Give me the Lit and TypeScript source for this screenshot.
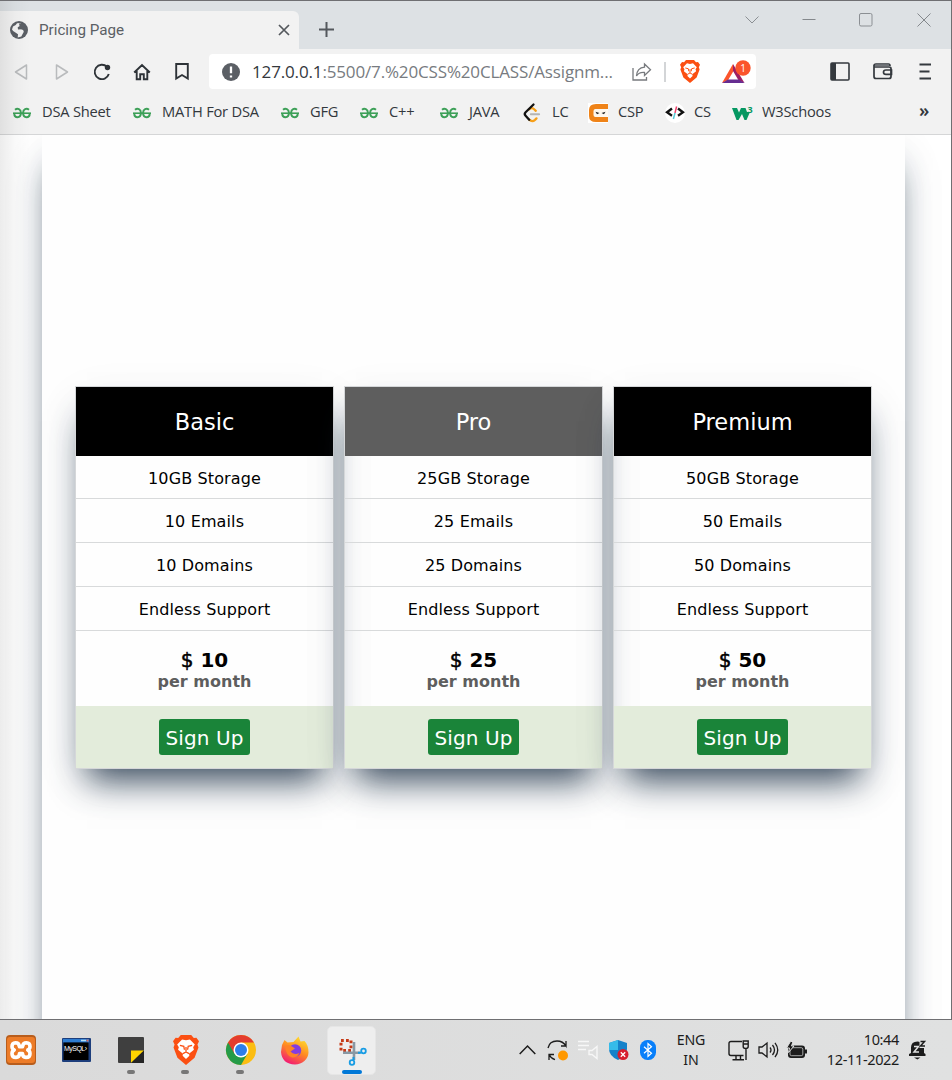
import { LitElement, html, css, svg } from "lit";
import { customElement, property } from "lit/decorators.js";

const lion = svg`
  <path d="M6 0h8l2 2.400 2-.3 2 2.900-1.200 2.500.8 2.500-3 8.200L10 24l-6.600-5.800-3-8.200.8-2.500L0 5l2-2.900 2 .3z" fill="#fb4f12"/>
  <path d="M10 4.200l3-.7 3.800 4-1.300 2.200.6 2-3.800 3.200.3 1.700L10 19.200l-2.600-2.600.3-1.700-3.800-3.200.6-2-1.300-2.200 3.800-4z" fill="#fff"/>
  <path d="M5.300 8.300l3 .8.5 2.700M14.700 8.300l-3 .8-.5 2.700M7.600 14.900l2.400-1.400 2.400 1.400M10 9.500v4" fill="none" stroke="#fb4f12" stroke-width="1"/>`;

const gfg = html`<svg width="18" height="12" viewBox="0 0 18 12" fill="none" stroke="#3da058" stroke-width="2">
  <path d="M2 2.800C4.500.9 7.900 2 7.900 5.800c0 3-1.500 4.400-3.400 4.400S1.300 9 1.300 6.500M16 2.800C13.500.9 10.100 2 10.100 5.800c0 3 1.500 4.400 3.400 4.400s3.200-1.200 3.200-3.700"/>
  <path d="M0 6.200h18" stroke-width="1.600"/></svg>`;

const leet = html`<svg width="18" height="20" viewBox="0 0 18 20" fill="none" stroke-linecap="round" stroke-width="2.300">
  <path d="M6.200 6.300q2.800-2.500 5 0l1.600 1.500M6.200 16.700q3 2.800 5.800.2l1.500-1.500" stroke="#f7a01a"/>
  <path d="M10.500 1.500L2.600 9.200q-1.700 1.700 0 3.500l3.600 4" stroke="#111"/>
  <path d="M7.800 11.300h8.300" stroke="#b4b4b4" stroke-width="2"/></svg>`;

const ninja = html`<svg width="20" height="20" viewBox="0 0 20 20">
  <rect width="20" height="20" fill="#fff"/>
  <path d="M20 1H8Q1 1 1 7v6q0 6 7 6h12v-5H8.500Q6 13.500 6 10t2.500-4H20z" fill="#ef8318"/>
  <rect x="5.500" y="6" width="14.500" height="8" rx="2" fill="#fdf7ee"/>
  <path d="M7.500 8.800l4 1.200-2.500 1.200zM17.500 8.800l-4 1.200 2.500 1.200z" fill="#222"/></svg>`;

const code = html`<svg width="20" height="20" viewBox="0 0 20 20" fill="none" stroke="#111" stroke-width="2.300">
  <circle cx="10" cy="10" r="10" fill="#fff" stroke="none"/>
  <path d="M7 5.500L2 9.300l5 3.500M13 5.500l5 3.800-5 3.500"/>
  <path d="M11.600 3.500L10 10" stroke="#f0406c" stroke-width="1.500"/><path d="M10 10l-1.600 6" stroke="#54cbd8" stroke-width="1.500"/></svg>`;

const w3 = html`<svg width="21" height="16" viewBox="0 0 21 16">
  <path d="M0 3h5l2 4.500L9 3h4.500l1.500 4h3l-3.500 8h-2L10 9l-3.500 6h-2z" fill="#059862"/>
  <text x="15.500" y="7.500" font-size="9" font-weight="700" font-family="Open Sans, sans-serif" fill="#059862">3</text></svg>`;

const bookmarks = [
  { label: "DSA Sheet", icon: gfg, pitch: 120, slot: 29 },
  { label: "MATH For DSA", icon: gfg, pitch: 148, slot: 29 },
  { label: "GFG", icon: gfg, pitch: 79, slot: 29 },
  { label: "C++", icon: gfg, pitch: 80, slot: 29 },
  { label: "JAVA", icon: gfg, pitch: 83, slot: 29 },
  { label: "LC", icon: leet, pitch: 65, slot: 29 },
  { label: "CSP", icon: ninja, pitch: 77, slot: 30 },
  { label: "CS", icon: code, pitch: 67, slot: 29 },
  { label: "W3Schoos", icon: w3, pitch: 179, slot: 30 },
];

@customElement("browser-chrome")
class BrowserChrome extends LitElement {
  static styles = css`
    :host { display: block; font-family: "Noto Sans", "Open Sans", sans-serif; color: #33383d; }
    svg { display: block; flex: none; overflow: visible; }
    .titlebar { display: flex; height: 49px; background: #dde1e4; box-sizing: border-box; border-top: 1px solid #6f6f72; }
    .tab { display: flex; align-items: center; width: 299px; height: 38px; margin-top: 10px; background: #f2f2f2; border-radius: 0 6px 0 0; box-sizing: border-box; padding: 0 9px 0 10px; }
    .tab-title { margin-left: 11px; flex: 1; font-family: Roboto, sans-serif; font-size: 15.200px; color: #5b6065; }
    .plus { margin: 21px 0 0 20px; }
    .controls { display: flex; align-items: flex-start; margin: 12px 20px 0 auto; }
    .controls svg + svg { margin-left: 43px; }
    .toolbar { display: flex; align-items: center; height: 45px; background: #f2f2f2; }
    .nav { display: flex; align-items: center; width: 209px; }
    .nav span { display: flex; justify-content: center; width: 40px; }
    .nav span:first-child { width: 42px; }
    .address { display: flex; align-items: center; width: 547px; height: 35px; background: #fff; border-radius: 4px; }
    .info { margin: 0 12px 0 13px; }
    .url { width: 380px; margin-top: -1px; font-size: 17px; white-space: nowrap; font-family: "Open Sans", sans-serif; color: #777b80; letter-spacing: -.15px; }
    .host { color: #34383c; }
    .separator { width: 1.500px; height: 20px; margin: 0 14px 0 13px; background: #d3d5d7; }
    .rewards { margin-left: 22px; }
    .right { display: flex; align-items: center; gap: 23px; margin-left: 74px; }
    .bookmarks { display: flex; align-items: center; height: 40px; padding: 0 0 0 13px; background: #f2f2f2; border-bottom: 1px solid #d5d6d7; overflow: hidden; }
    .bookmark { flex: none; display: flex; align-items: center; height: 36px; margin-top: -6px; font-family: "Open Sans", sans-serif; font-size: 14.700px; white-space: nowrap; letter-spacing: -.22px; }
    .slot { flex: none; display: flex; align-items: center; padding-top: 3px; }
    .more { font-size: 18px; font-weight: 600; margin: -9px 0 0 8px; }
    .badge { font: 10px "Open Sans", sans-serif; fill: #fff; }
  `;
  render() {
    return html`
      <div class="titlebar">
        <div class="tab">
          <svg width="18" height="18" viewBox="0 0 18 18"><circle cx="9" cy="9" r="9" fill="#5b5f65"/>
            <path d="M3 5.500Q6.500 4 7 2.200l3.800-.2-.5 2.700-2.600 1.500.3 2.300 4.800-.2 1 2.400-2.500 4.700-3.600 1 .3-3.200-2.600-1.800Q2.500 10 2 8.500z" fill="#f2f2f2"/><path d="M9 2.600l3.600-.4 2.600 3.100-2.700 3.600-2.500-2z" fill="#5b5f65"/></svg>
          <div class="tab-title">Pricing Page</div>
          <svg width="12" height="12" viewBox="0 0 12 12" stroke="#54585d" stroke-width="1.700"><path d="M1 1l10 10M11 1L1 11"/></svg>
        </div>
        <svg class="plus" width="15" height="15" viewBox="0 0 15 15" stroke="#54585d" stroke-width="2"><path d="M7.500 0v15M0 7.500h15"/></svg>
        <div class="controls">
          <svg width="14" height="14" viewBox="0 0 14 14" fill="none" stroke="#8b8f93"><path d="M.5 3.500l6.500 6.500 6.500-6.500"/></svg>
          <svg width="14" height="14" viewBox="0 0 14 14" fill="none" stroke="#84888c"><path d="M.5 6.500h13"/></svg>
          <svg width="15" height="14" viewBox="0 0 15 14" fill="none" stroke="#8b8f93"><rect x=".5" y=".5" width="12.500" height="12.500" rx="1.500"/></svg>
          <svg width="14" height="14" viewBox="0 0 14 14" fill="none" stroke="#84888c"><path d="M.5.5l13 13M13.500.5l-13 13"/></svg>
        </div>
      </div>
      <div class="toolbar">
        <div class="nav">
          <span><svg width="14" height="16" viewBox="0 0 14 16" fill="none" stroke="#b9bbbd" stroke-width="1.500" stroke-linejoin="round"><path d="M12.500 1v14L1.500 8z"/></svg></span>
          <span><svg width="14" height="16" viewBox="0 0 14 16" fill="none" stroke="#b9bbbd" stroke-width="1.500" stroke-linejoin="round"><path d="M1.500 1v14L12.500 8z"/></svg></span>
          <span><svg width="18" height="18" viewBox="0 0 18 18" fill="none" stroke="#2e3338" stroke-width="1.900"><path d="M14 3.800A7.200 7.200 0 1 0 15.800 11"/><circle cx="14.500" cy="4.500" r="2.700" fill="#2e3338" stroke="none"/></svg></span>
          <span><svg width="18" height="18" viewBox="0 0 18 18" fill="none" stroke="#2e3338" stroke-width="1.900"><path d="M1.200 9.500L9 2l7.800 7.500M3.700 8v8.200h3.500v-4.900h3.600v4.900h3.500V8"/></svg></span>
          <span><svg width="14" height="17" viewBox="0 0 14 17" fill="none" stroke="#2e3338" stroke-width="1.900"><path d="M1.200 1h11.600v14.500L7 12l-5.800 3.500z"/></svg></span>
        </div>
        <div class="address">
          <svg class="info" width="18" height="18" viewBox="0 0 18 18"><circle cx="9" cy="9" r="9" fill="#5b5f65"/><path d="M9 3.500v6.800M9 12.500v2" stroke="#fff" stroke-width="2.300"/></svg>
          <div class="url"><span class="host">127.0.0.1</span>:5500/7.%20CSS%20CLASS/Assignm...</div>
          <svg width="19" height="18" viewBox="0 0 19 18" fill="none" stroke="#777a7e" stroke-width="1.300"><path d="M1 5v12h13.500v-3"/><path d="M12.500 1l6 5.800-6 5.700V9.500Q7 9 4.500 13 5 4.800 12.500 4.200z"/></svg>
          <div class="separator"></div>
          <svg width="20" height="23" viewBox="0 0 20 24" preserveAspectRatio="none">${lion}</svg>
          <svg class="rewards" width="30" height="24" viewBox="0 0 30 24">
            <path d="M11 4L0 23l6-2.800L11.500 11z" fill="#fb542b"/><path d="M11 4l11.500 19-6-2.800L11 11z" fill="#9e1f63"/><path d="M0 23l6-3.500h11l5.500 3.500z" fill="#662d91"/>
            <circle cx="21" cy="8" r="7.700" fill="#fb542b"/><text class="badge" x="18.200" y="11.700">1</text></svg>
        </div>
        <div class="right">
          <svg width="20" height="19" viewBox="0 0 20 19"><rect x="1" y="1" width="18" height="17" rx="1" fill="none" stroke="#34393e" stroke-width="1.600"/><path d="M1 1h5v17H1z" fill="#34393e"/></svg>
          <svg width="20" height="17" viewBox="0 0 20 17" fill="none" stroke="#34393e" stroke-width="1.700"><path d="M1 2v11.500q0 2 2 2h13q2 0 2-2v-8q0-1.500-2-1.500H1M1 3q0-2 2-2h12.500q1.500 0 1.500 2"/><path d="M2 2.300h14" stroke="#72767a"/><path d="M18.500 7h-5.500q-2.500 0-2.500 2.200t2.500 2.200h5.500z"/></svg>
          <svg width="15" height="17" viewBox="-3 0 15 17" stroke="#34393e" stroke-width="1.900"><path d="M.5 1.500h11.500M.5 8.500h10M.5 15.500h11.500"/></svg>
        </div>
      </div>
      <div class="bookmarks">
        ${bookmarks.map((b) => html`<div class="bookmark" style="width:${b.pitch}px"><span class="slot" style="width:${b.slot}px">${b.icon}</span>${b.label}</div>`)}
        <div class="more">»</div>
      </div>`;
  }
}

@customElement("price-card")
class PriceCard extends LitElement {
  @property() name = "";
  @property({ type: Number }) amount = 0;
  @property({ type: Boolean }) muted = false;
  static styles = css`
    :host { display: block; box-sizing: border-box; width: 259px; border: 1px solid #d5d7d9; text-align: center; font-family: Verdana, "DejaVu Sans", sans-serif; color: #000;
      box-shadow: rgba(38, 57, 77, .93) 0 23px 33px -12px, rgba(38, 57, 77, .05) 0 14px 50px 0; }
    .head { height: 69px; line-height: 70px; background: #000; color: #fff; font-size: 22.500px; }
    .muted { background: #5e5e5e; }
    .row { height: 43px; line-height: 45px; font-size: 16px; letter-spacing: .13px; border-bottom: 1px solid #d8dadb; }
    .first { height: 42px; }
    .price { height: 75px; box-sizing: border-box; padding-top: 18px; font-weight: 700; font-size: 20px; line-height: 22px; }
    .period { font-size: 16px; line-height: 21px; color: #5e5e5e; }
    .foot { display: flex; align-items: center; justify-content: center; height: 62px; background: #e3ecdb; }
    .button { width: 91px; height: 36px; box-sizing: border-box; padding: 1px 0 0; border: 0; border-radius: 3px; background: #1a8439; color: #fff; font: 20px/36px "DejaVu Sans", sans-serif; letter-spacing: .1px; }
    .dollar { font-weight: 400; -webkit-text-stroke: .5px #000; }
  `;
  render() {
    return html`
      <div class="head ${this.muted ? "muted" : ""}">${this.name}</div>
      <div class="row first">${this.amount}GB Storage</div>
      <div class="row">${this.amount} Emails</div>
      <div class="row">${this.amount} Domains</div>
      <div class="row">Endless Support</div>
      <div class="price"><span class="dollar">$</span> ${this.amount}<div class="period">per month</div></div>
      <div class="foot"><button class="button">Sign Up</button></div>`;
  }
}

@customElement("task-bar")
class TaskBar extends LitElement {
  static styles = css`
    :host { display: flex; height: 60px; background: linear-gradient(90deg, #dadada, #e0e1e1); font-family: "Noto Sans", sans-serif; color: #1c1c1c; }
    svg { display: block; overflow: visible; flex: none; }
    .apps { display: flex; width: 384px; padding-top: 6px; height: 48px; margin-left: -6px; }
    .app { flex: none; position: relative; display: flex; align-items: center; justify-content: center; width: 54.800px; height: 48px; }
    .active { width: 47px; margin-left: 4px; border: 1px solid #e6e6e6; height: 47px; border-radius: 5px; background: #eeeeee; }
    .dot { position: absolute; bottom: 0; left: 23px; width: 8px; height: 4px; border-radius: 2px; background: #777; }
    .bar { position: absolute; bottom: 0; left: 14px; width: 20px; height: 4px; border-radius: 2px; background: #0078d7; }
    .mysql { font: 7px "Liberation Sans", sans-serif; fill: #fff; }
    .tray { display: flex; align-items: center; margin-left: auto; padding-right: 25px; }
    .sync { margin-left: 11px; }
    .sound { margin-left: 10px; }
    .shield { margin-left: 11px; }
    .bt { margin-left: 11px; }
    .net { margin-left: 17px; }
    .vol { margin-left: 9px; }
    .bat { margin-left: 9px; }
    .bell { margin-left: 10px; }
    .lang { width: 40px; margin-left: 15px; text-align: center; font-size: 14.200px; line-height: 20px; letter-spacing: -.1px; }
    .clock { width: 80px; margin-left: 12px; text-align: right; font-size: 14.500px; line-height: 20px; letter-spacing: -.35px; margin-top: -2px; }
  `;
  render() {
    return html`
      <div class="apps">
        <div class="app"><svg width="30" height="30" viewBox="0 0 30 30"><rect width="30" height="30" rx="4" fill="#b85d1c"/><rect x="1" y="2" width="28" height="26" rx="3" fill="#ed7c28"/>
          <path d="M9.500 7.800Q6 8 6 11.500q0 2.500 2.200 3.500Q6 16 6 18.700q0 3.700 4 3.700 3.500 0 3.500-3.900h3q0 3.900 3.500 3.900 4 0 4-3.700 0-2.700-2.200-3.700 2.200-1 2.200-3.500 0-3.500-3.500-3.700-3.500 0-4 3.900h-3q-.5-3.900-4-3.900z" fill="none" stroke="#fff" stroke-width="3.600" stroke-linejoin="round"/></svg></div>
        <div class="app"><svg width="29" height="24" viewBox="0 0 29 24"><rect width="29" height="24" rx="1" fill="#1d3e7c"/><rect x="1" y="1" width="26" height="3.500" fill="#2d7bd0"/><path d="M19 2.500h5" stroke="#b5def5" stroke-width="1.500"/><path d="M24.500 2.500h2" stroke="#d76c60" stroke-width="2"/><rect x="1.500" y="4.500" width="25" height="17.500" fill="#000"/><text class="mysql" x="2" y="12.500" textLength="23">MySQL›</text></svg></div>
        <div class="app"><svg width="26" height="26" viewBox="0 0 26 26"><rect width="26" height="26" rx="1" fill="#3f3f3f"/><path d="M13 13.500h13L13 26z" fill="#ffd500"/><path d="M26 13.500V26H13z" fill="#252525"/></svg><i class="dot"></i></div>
        <div class="app"><svg width="26" height="30" viewBox="0 0 20 24" preserveAspectRatio="none">${lion}</svg><i class="dot"></i></div>
        <div class="app"><svg width="30" height="30" viewBox="0 0 30 30"><circle cx="15" cy="15" r="15" fill="#fbbd12"/><path d="M15 15L2 7.500A15 15 0 0 0 15 30l6.500-11.300z" fill="#259b48"/><path d="M2 7.500A15 15 0 0 1 28 7.500H15l-6.500 11.200z" fill="#e43c2f"/><circle cx="15" cy="15" r="7.500" fill="#fff"/><circle cx="15" cy="15" r="6" fill="#2d7eea"/></svg><i class="dot"></i></div>
        <div class="app"><svg width="28" height="29" viewBox="0 0 28 29"><defs><linearGradient id="fire" x1=".8" y1="0" x2=".3" y2="1"><stop stop-color="#ffe52f"/><stop offset=".5" stop-color="#ff8b21"/><stop offset="1" stop-color="#f21677"/></linearGradient></defs>
          <path d="M1 9l2.500-5 3 2.500 6-.5 5-5.500 2 5 4-.5q4 4 4 11.500A13.500 12.500 0 0 1 14 28.500Q1 28 0 16z" fill="url(#fire)"/><circle cx="14" cy="14.500" r="6.200" fill="#843ce0"/><path d="M4 10q4-1.500 7 .5l3 2-4.500 3q3 4 9 1.500-2.500 5-7.500 4.500Q5 20 4 10z" fill="#ff8225"/></svg></div>
        <div class="app active"><svg width="28" height="28" viewBox="0 0 28 28" fill="none"><rect x="4" y="3.500" width="10" height="10" stroke="#c63a17" stroke-width="3" stroke-dasharray="2.800 2.200"/><path d="M17 5v18M6 15.700h17" stroke="#8998a3" stroke-width="2.600"/><circle cx="26.500" cy="14" r="2.300" stroke="#179ce4" stroke-width="1.800"/><circle cx="15" cy="25.500" r="2.300" stroke="#179ce4" stroke-width="1.800"/><path d="M24 15.700h-3M16.500 23v-3" stroke="#179ce4" stroke-width="2"/></svg><i class="bar"></i></div>
      </div>
      <div class="tray">
        <svg width="17" height="10" viewBox="0 0 17 10" fill="none" stroke="#1c1c1c" stroke-width="1.500"><path d="M.7 9l7.800-8 7.800 8"/></svg>
        <svg class="sync" width="21" height="21" viewBox="0 0 21 21" fill="none" stroke="#1c1c1c" stroke-width="1.300"><path d="M1 8Q2.500 1 10 1q6 0 9 5V1M19 6h-5M2 20v-5.500h5M2 14.500q2 4 6 5.200"/><circle cx="16" cy="15.500" r="5" fill="#ff9800" stroke="none"/></svg>
        <svg class="sound" width="20" height="20" viewBox="0 0 20 20" fill="none" stroke="#f7f7f7" stroke-width="1.400"><path d="M0 1.500h11M0 5.500h11M0 9.500h8"/><path d="M11 10.500h3l5-4v12l-5-4h-3z"/></svg>
        <svg class="shield" width="20" height="21" viewBox="0 0 20 21"><path d="M9 0l9 3v6q0 7-9 11Q0 16 0 9V3z" fill="#1582ca"/><path d="M9 0v10H0V3z" fill="#36bbe9"/><circle cx="14" cy="14.500" r="5.500" fill="#d71f2f"/><path d="M11.800 12.300l4.400 4.400M16.200 12.300l-4.400 4.400" stroke="#fff" stroke-width="1.300"/></svg>
        <svg class="bt" width="16" height="20" viewBox="0 0 16 20"><rect width="16" height="20" rx="7.500" fill="#087ffa"/><path d="M4 6.700l7.500 6.600L8 16.500v-13l3.500 3.200L4 13.300" fill="none" stroke="#fff" stroke-width="1.200"/></svg>
        <div class="lang">ENG<br>IN</div>
        <svg class="net" width="21" height="21" viewBox="0 0 21 21" fill="none" stroke="#1c1c1c" stroke-width="1.400"><path d="M14 1.500H3q-2 0-2 2v10q0 2 2 2h12.500M8 15.500v4M12.500 15.500v4M4.500 19.700h11.500M18 9v11M15.200 1h5v5.500q0 2-2.500 2t-2.500-2zM15 4h5"/></svg>
        <svg class="vol" width="20" height="18" viewBox="0 0 20 18" fill="none" stroke="#1c1c1c" stroke-width="1.300"><path d="M1 6v6h3l5 4V2L4 6zM12 6.500q2 2.500 0 5M14.500 4q4 5 0 10M17 1.800q5.500 7.200 0 14.400"/></svg>
        <svg class="bat" width="20" height="17" viewBox="0 0 20 17"><rect x="1" y="3.500" width="17" height="12.500" rx="3" fill="#1c1c1c"/><rect x="3" y="5.700" width="12.800" height="8" rx="1.500" fill="none" stroke="#e0e1e1" stroke-width=".7"/><path d="M18 7.500h2v4h-2z" fill="#1c1c1c"/><path d="M3.500-.5L-.5 6h3L1.500 10.500 7 4H4.500L6-.5z" fill="#1c1c1c" stroke="#e0e1e1" stroke-width="1"/></svg>
        <div class="clock">10:44<br>12-11-2022</div>
        <svg class="bell" width="18" height="20" viewBox="0 0 18 20"><path d="M2 13V7.500Q2 1.500 8.500 1.500T15 7.500V13l1.500 1v2H0v-2z" fill="#1c1c1c"/><path d="M5 17.500h6.500l-3.200 2z" fill="#1c1c1c"/><path d="M10.500 0h7v8h-7z" fill="#e0e1e1"/><path d="M5 6.500h4.500L5 12h5" fill="none" stroke="#e0e1e1" stroke-width="1.500"/><path d="M11.500 1.500h4l-4 4.500h4.500" fill="none" stroke="#1c1c1c" stroke-width="1.500"/></svg>
      </div>`;
  }
}

@customElement("app-root")
class AppRoot extends LitElement {
  static styles = css`
    :host { display: flex; flex-direction: column; width: 952px; height: 1080px; overflow: hidden; background: #fff; }
    .window { position: relative; flex: none; box-sizing: border-box; height: 1020px; border-right: 1px solid #6f6f72; border-bottom: 1px solid #6f6f72; overflow: hidden; }
    .shade { position: absolute; inset: 1px auto 0 0; width: 30px; background: linear-gradient(90deg, rgba(0,0,0,.075), rgba(0,0,0,.025) 50%, transparent); pointer-events: none; }
    .viewport { height: 884px; overflow: hidden; }
    .page { display: flex; align-items: center; justify-content: center; gap: 10px; box-sizing: border-box; width: 863px; height: 960px; margin-left: 42px; padding-bottom: 76px; background: #fefefe;
      box-shadow: rgba(38, 57, 77, .93) 0 23px 33px -12px, rgba(38, 57, 77, .05) 0 14px 50px 0; }
  `;
  render() {
    return html`
      <div class="window">
        <browser-chrome></browser-chrome>
        <div class="viewport">
          <div class="page">
            <price-card name="Basic" amount="10"></price-card>
            <price-card name="Pro" amount="25" muted></price-card>
            <price-card name="Premium" amount="50"></price-card>
          </div>
        </div>
        <div class="shade"></div>
      </div>
      <task-bar></task-bar>`;
  }
}
